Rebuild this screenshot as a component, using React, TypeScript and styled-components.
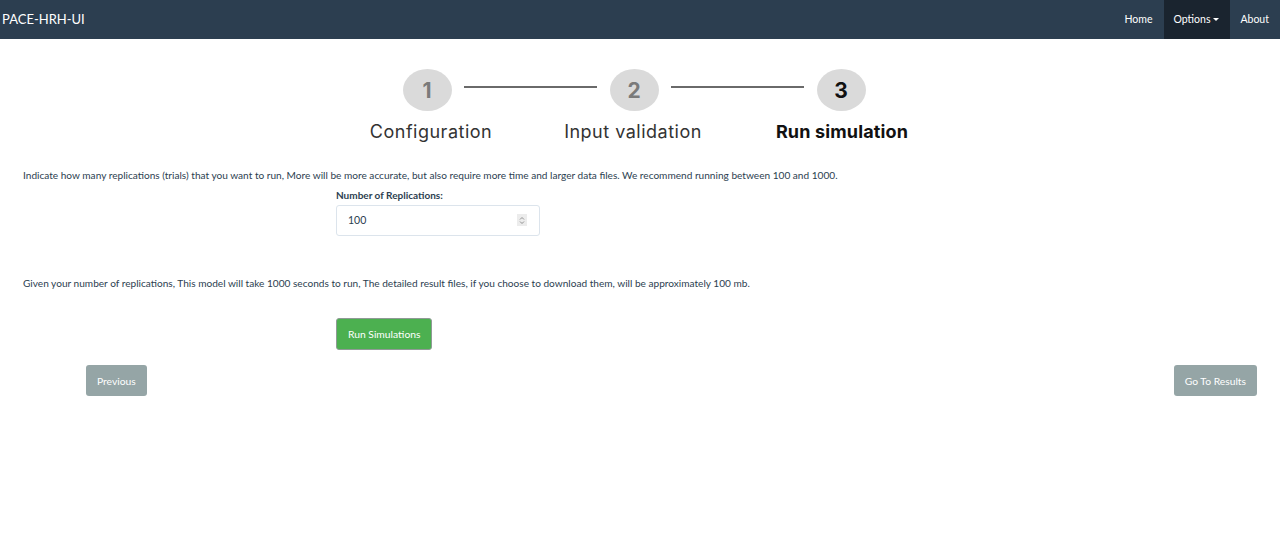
import React from "react";
import styled, { createGlobalStyle } from "styled-components";

const Global = createGlobalStyle`
  html, body { margin: 0; padding: 0; background: #fff; }
  body { font-family: Lato, "Helvetica Neue", Arial, sans-serif; color: #2c3e50; font-size: 10.1px; }
  * { box-sizing: border-box; }
`;

const Nav = styled.nav`
  height: 39px;
  background: #2c3e50;
  display: flex;
  align-items: stretch;
  justify-content: space-between;
`;
const Brand = styled.a`
  color: #fff;
  font-size: 13px;
  display: flex;
  align-items: center;
  padding-left: 2px;
  padding-bottom: 2px;
`;
const NavList = styled.ul`
  list-style: none;
  margin: 0;
  padding: 0;
  display: flex;
`;
const NavItem = styled.li<{ $active?: boolean }>`
  display: flex;
  align-items: center;
  padding: 0 11px 1px 10px;
  color: #fff;
  font-size: 10.5px;
  background: ${(p) => (p.$active ? "#1a242f" : "transparent")};
`;
const Caret = styled.span`
  display: inline-block;
  width: 0;
  height: 0;
  margin-left: 3px;
  border-top: 3px solid #fff;
  border-left: 3px solid transparent;
  border-right: 3px solid transparent;
  vertical-align: middle;
`;

const Main = styled.main`
  padding: 30px 0 0 23px;
`;

const Stepper = styled.div`
  display: flex;
  justify-content: center;
  margin-left: -23px;
  padding-right: 12px;
`;
const StepCol = styled.div`
  display: flex;
  flex-direction: column;
  align-items: center;
  width: 130px;
`;
const Circle = styled.div<{ $done?: boolean }>`
  width: 49px;
  height: 42px;
  border-radius: 50%;
  background: #dadada;
  display: flex;
  align-items: center;
  justify-content: center;
  font-family: Inter, "Liberation Sans", Arial, sans-serif;
  font-weight: 700;
  font-size: 21px;
  color: ${(p) => (p.$done ? "#111" : "#7a7a7a")};
`;
const StepLabel = styled.div<{ $bold?: boolean; $shift: number }>`
  margin-top: 10px;
  margin-left: ${(p) => p.$shift * 2}px;
  font-family: Inter, "Liberation Sans", Arial, sans-serif;
  font-size: 18px;
  letter-spacing: ${(p) => (p.$bold ? "0.15px" : "0.5px")};
  font-weight: ${(p) => (p.$bold ? 700 : 400)};
  color: ${(p) => (p.$bold ? "#111" : "#333")};
  white-space: nowrap;
`;
const Connector = styled.div`
  flex: none;
  width: 133px;
  height: 2px;
  background: #6a6a6a;
  margin: 17px -28px 0;
`;

const Para = styled.p<{ $top: number }>`
  margin: ${(p) => p.$top}px 0 0;
  line-height: 14px;
`;
const FieldBlock = styled.div`
  margin: 7px 0 0 313px;
  display: flex;
  flex-direction: column;
  width: 204px;
`;
const Label = styled.label`
  font-weight: 700;
  font-size: 10px;
  margin-bottom: 4px;
`;
const InputBox = styled.div`
  height: 31px;
  border: 1px solid #dce4ec;
  border-radius: 3px;
  display: flex;
  align-items: center;
  justify-content: space-between;
  padding: 0 12px 1px 11px;
  font-size: 10.5px;
  color: #2c3e50;
`;
const Spin = styled.div`
  width: 10px;
  height: 12px;
  background: #ececec;
  display: flex;
  align-items: center;
  justify-content: center;
`;

const RunRow = styled.div`
  margin: 28px 0 0 313px;
`;
const Btn = styled.button<{ $variant: "success" | "default" }>`
  font-family: Lato, Arial, sans-serif;
  font-size: 10.3px;
  color: #fff;
  height: ${(p) => (p.$variant === "success" ? "32px" : "31px")};
  padding: 0 11px;
  border-radius: 3px;
  cursor: pointer;
  background: ${(p) => (p.$variant === "success" ? "#4cb050" : "#95a5a6")};
  border: ${(p) => (p.$variant === "success" ? "1px solid #8f9a95" : "none")};
`;
const NavRow = styled.div`
  display: flex;
  justify-content: space-between;
  margin: 15px 23px 0 86px;
`;

export default function App() {
  return (
    <>
      <Global />
      <Nav>
        <Brand>PACE-HRH-UI</Brand>
        <NavList>
          <NavItem>Home</NavItem>
          <NavItem $active>
            Options <Caret />
          </NavItem>
          <NavItem>About</NavItem>
        </NavList>
      </Nav>
      <Main>
        <Stepper>
          <StepCol>
            <Circle>1</Circle>
            <StepLabel $shift={4}>Configuration</StepLabel>
          </StepCol>
          <Connector />
          <StepCol>
            <Circle>2</Circle>
            <StepLabel $shift={-1}>Input validation</StepLabel>
          </StepCol>
          <Connector />
          <StepCol>
            <Circle $done>3</Circle>
            <StepLabel $bold $shift={1}>Run simulation</StepLabel>
          </StepCol>
        </Stepper>
        <Para $top={26}>
          Indicate how many replications (trials) that you want to run, More will be more accurate, but also require
          more time and larger data files. We recommend running between 100 and 1000.
        </Para>
        <FieldBlock>
          <Label>Number of Replications:</Label>
          <InputBox>
            <span>100</span>
            <Spin>
              <svg width="6" height="9" viewBox="0 0 6 9">
                <path d="M1 3.5 L3 1.5 L5 3.5 M1 5.5 L3 7.5 L5 5.5" fill="none" stroke="#777" strokeWidth="0.8" />
              </svg>
            </Spin>
          </InputBox>
        </FieldBlock>
        <Para $top={40}>
          Given your number of replications, This model will take 1000 seconds to run, The detailed result files, if
          you choose to download them, will be approximately 100 mb.
        </Para>
        <RunRow>
          <Btn $variant="success">Run Simulations</Btn>
        </RunRow>
      </Main>
      <NavRow>
        <Btn $variant="default">Previous</Btn>
        <Btn $variant="default">Go To Results</Btn>
      </NavRow>
    </>
  );
}
